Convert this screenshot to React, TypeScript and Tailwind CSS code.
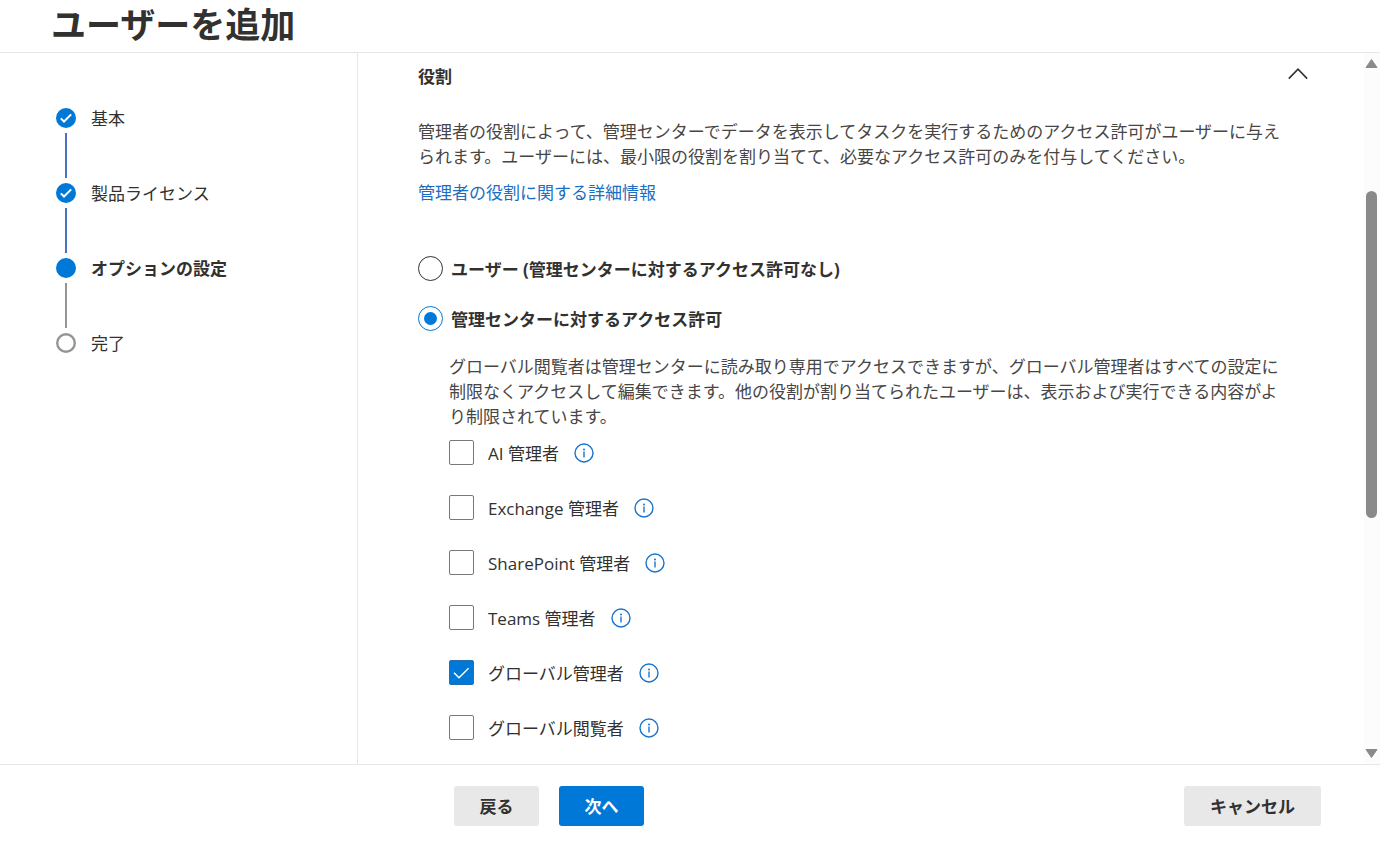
import { useState } from 'react'
import clsx from 'clsx'

type StepState = 'done' | 'current' | 'todo'

interface Step {
  label: string
  state: StepState
}

const steps: Step[] = [
  { label: '基本', state: 'done' },
  { label: '製品ライセンス', state: 'done' },
  { label: 'オプションの設定', state: 'current' },
  { label: '完了', state: 'todo' },
]

const roles = [
  { id: 'ai', label: 'AI 管理者' },
  { id: 'exchange', label: 'Exchange 管理者' },
  { id: 'sharepoint', label: 'SharePoint 管理者' },
  { id: 'teams', label: 'Teams 管理者' },
  { id: 'global-admin', label: 'グローバル管理者' },
  { id: 'global-reader', label: 'グローバル閲覧者' },
]

function StepIcon({ state }: { state: StepState }) {
  return (
    <svg viewBox="0 0 20 20" className="size-5 shrink-0" fill="none" aria-hidden="true">
      {state === 'todo' ? (
        <circle cx="10" cy="10" r="8.8" stroke="#979593" strokeWidth="2.4" />
      ) : (
        <circle cx="10" cy="10" r="10" fill="#0078d7" />
      )}
      {state === 'done' && <path d="M4.8 10.4 8 13.5l7.2-7.1" stroke="#fff" strokeWidth="2" />}
    </svg>
  )
}

function StepList() {
  return (
    <ol>
      {steps.map((step, i) => (
        <li key={step.label} className="flex gap-[15px]">
          <div className="flex flex-col items-center">
            <StepIcon state={step.state} />
            {i < steps.length - 1 && (
              <div
                className={clsx(
                  'my-[5px] h-[45px] w-0.5',
                  step.state === 'done' ? 'bg-[#4a72c4]' : 'bg-[#979593]'
                )}
              />
            )}
          </div>
          <span
            className={clsx('leading-[22px]', step.state === 'current' && 'font-bold')}
            aria-current={step.state === 'current' ? 'step' : undefined}
          >
            {step.label}
          </span>
        </li>
      ))}
    </ol>
  )
}

interface RadioProps {
  id: string
  label: string
  checked: boolean
  onChange: () => void
}

function AccessRadio({ id, label, checked, onChange }: RadioProps) {
  return (
    <div className="flex items-start gap-2">
      <span className="grid size-[25px] shrink-0 place-items-center">
        <input
          type="radio"
          id={id}
          name="access"
          checked={checked}
          onChange={onChange}
          className="col-start-1 row-start-1 size-[25px] appearance-none rounded-full border border-[#323130] bg-white checked:border-[#0078d7]"
        />
        {checked && (
          <span className="pointer-events-none col-start-1 row-start-1 size-[13px] rounded-full bg-[#0078d7]" />
        )}
      </span>
      <label htmlFor={id} className="pt-px leading-[25px] font-bold">
        {label}
      </label>
    </div>
  )
}

interface RoleProps {
  id: string
  label: string
  checked: boolean
  onToggle: () => void
}

function RoleCheckbox({ id, label, checked, onToggle }: RoleProps) {
  return (
    <li className="flex items-start">
      <span className="grid size-[25px] shrink-0 place-items-center">
        <input
          type="checkbox"
          id={id}
          checked={checked}
          onChange={onToggle}
          className="col-start-1 row-start-1 size-[25px] appearance-none rounded-[2px] border border-[#7a7876] bg-white checked:border-[#2b6cb0] checked:bg-[#0078d7]"
        />
        {checked && (
          <svg
            viewBox="0 0 25 25"
            className="pointer-events-none col-start-1 row-start-1 size-[25px]"
            fill="none"
            aria-hidden="true"
          >
            <path d="M5 12.8 10 17.8 19.6 8.2" stroke="#fff" strokeWidth="1.5" />
          </svg>
        )}
      </span>
      <label htmlFor={id} className="ml-3.5 pt-px leading-[25px]">
        {label}
      </label>
      <button type="button" aria-label={`${label}の詳細`} className="mt-[3px] ml-[15px]">
        <svg viewBox="0 0 20 20" className="size-5" fill="none" aria-hidden="true">
          <circle cx="10" cy="10" r="9" stroke="#1b74cc" strokeWidth="1.4" />
          <circle cx="10" cy="6.4" r="1" fill="#1b74cc" />
          <path d="M10 8.6v6" stroke="#1b74cc" strokeWidth="1.4" />
        </svg>
      </button>
    </li>
  )
}

function ScrollTrack() {
  return (
    <div className="flex w-4 shrink-0 flex-col items-center bg-[#fcfcfc] py-[5px] pr-px" aria-hidden="true">
      <svg viewBox="0 0 13 11" className="h-[11px] w-[13px] shrink-0" fill="#8a8a8a" stroke="#8a8a8a" strokeLinejoin="round">
        <path d="M6.5 1.5 12 9.5H1Z" />
      </svg>
      <div className="grow-[122]" />
      <div className="w-[11px] grow-[327] rounded-full bg-[#8a8a8a]" />
      <div className="grow-[230]" />
      <svg viewBox="0 0 13 11" className="h-[11px] w-[13px] shrink-0" fill="#8a8a8a" stroke="#8a8a8a" strokeLinejoin="round">
        <path d="M1 1.5h11L6.5 9.5Z" />
      </svg>
    </div>
  )
}

export default function App() {
  const [open, setOpen] = useState(true)
  const [access, setAccess] = useState<'user' | 'admin'>('admin')
  const [selected, setSelected] = useState<string[]>(['global-admin'])

  const toggleRole = (id: string) => {
    setSelected((prev) => (prev.includes(id) ? prev.filter((r) => r !== id) : [...prev, id]))
  }

  return (
    <div
      lang="ja"
      className="flex h-screen flex-col bg-white font-['Open_Sans','Noto_Sans_CJK_JP',sans-serif] text-[17px] text-[#323130]"
    >
      <header className="border-b border-[#e6e6e6] pb-0.5 pl-[51px]">
        <h1 className="text-[35px] leading-[50px] font-bold">ユーザーを追加</h1>
      </header>

      <div className="flex min-h-0 flex-1">
        <nav className="w-[358px] shrink-0 border-r border-[#e6e6e6] pt-[55px] pl-14">
          <StepList />
        </nav>

        <main className="min-w-0 flex-1 overflow-y-auto pt-[11px] pr-14 pl-[60px] [scrollbar-width:none]">
          <div className="flex items-start justify-between">
            <h2 className="leading-[25px] font-bold">役割</h2>
            <button type="button" aria-label="役割" aria-expanded={open} onClick={() => setOpen(!open)}>
              <svg
                viewBox="0 0 20 20"
                className={clsx('size-5', !open && 'rotate-180')}
                fill="none"
                stroke="#323130"
                strokeWidth="1.6"
                aria-hidden="true"
              >
                <path d="M.8 14.6 10 5.2l9.2 9.4" />
              </svg>
            </button>
          </div>

          {open && (
            <>
              <p className="mt-[30px] leading-[25px] text-[#484644]">
                管理者の役割によって、管理センターでデータを表示してタスクを実行するためのアクセス許可がユーザーに与え
                <br />
                られます。ユーザーには、最小限の役割を割り当てて、必要なアクセス許可のみを付与してください。
              </p>
              <a href="#roles" className="mt-[11px] inline-block leading-[25px] text-[#1b6ec2]">
                管理者の役割に関する詳細情報
              </a>

              <div className="mt-[50px] flex flex-col gap-6">
                <AccessRadio
                  id="access-user"
                  label="ユーザー (管理センターに対するアクセス許可なし)"
                  checked={access === 'user'}
                  onChange={() => setAccess('user')}
                />
                <AccessRadio
                  id="access-admin"
                  label="管理センターに対するアクセス許可"
                  checked={access === 'admin'}
                  onChange={() => setAccess('admin')}
                />
              </div>

              <div className="mt-[22px] pl-[31px]">
                <p className="leading-[25px] text-[#484644]">
                  グローバル閲覧者は管理センターに読み取り専用でアクセスできますが、グローバル管理者はすべての設定に
                  <br />
                  制限なくアクセスして編集できます。他の役割が割り当てられたユーザーは、表示および実行できる内容がよ
                  <br />
                  り制限されています。
                </p>
                <ul id="roles" className="mt-[11px] flex flex-col gap-[29px]">
                  {roles.map((role) => (
                    <RoleCheckbox
                      key={role.id}
                      id={role.id}
                      label={role.label}
                      checked={selected.includes(role.id)}
                      onToggle={() => toggleRole(role.id)}
                    />
                  ))}
                </ul>
              </div>
            </>
          )}
        </main>

        <ScrollTrack />
      </div>

      <footer className="flex items-center gap-5 border-t border-[#e6e6e6] pt-[21px] pr-[59px] pb-[19px] pl-[454px] font-bold">
        <button type="button" className="h-10 min-w-[85px] rounded-[3px] bg-[#e8e8e8] px-6 pt-0.5">
          戻る
        </button>
        <button type="button" className="h-10 min-w-[85px] rounded-[3px] bg-[#0078d7] px-6 pt-0.5 text-white">
          次へ
        </button>
        <button type="button" className="ml-auto h-10 min-w-[137px] rounded-[3px] bg-[#e8e8e8] px-6 pt-0.5">
          キャンセル
        </button>
      </footer>
    </div>
  )
}
